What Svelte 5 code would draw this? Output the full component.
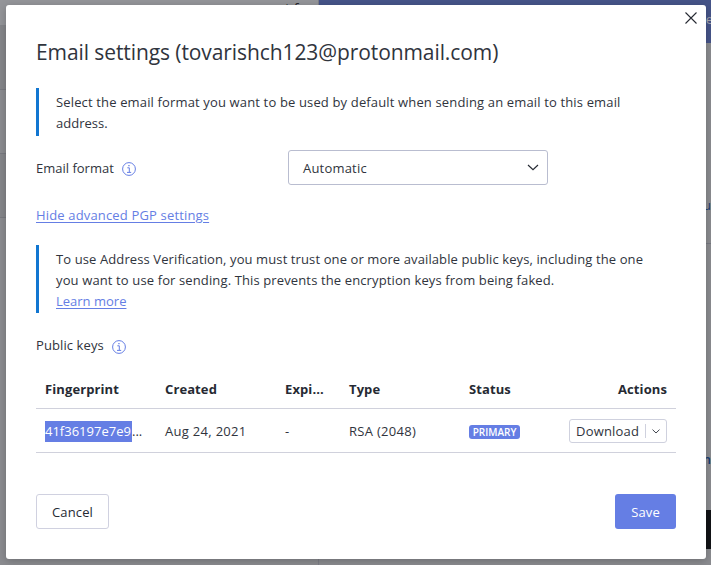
<script>
  const columns = ['Fingerprint', 'Created', 'Expires', 'Type', 'Status', 'Actions'];
  const keys = [
    { fingerprint: '41f36197e7e9', created: 'Aug 24, 2021', expires: '-', type: 'RSA (2048)', status: 'PRIMARY' }
  ];
</script>

{#snippet info()}
  <svg class="info" width="14" height="14" viewBox="0 0 14 14" fill="none" stroke="#657ee4">
    <circle cx="7" cy="7" r="6.4" />
    <path d="M5.3 5.8h2v4.4M5 10.4h4.2" />
    <path d="M6.3 3.6h1.3" stroke-width="1.3" />
  </svg>
{/snippet}

<div class="screen">
  <div class="backdrop" aria-hidden="true">
    <div class="side">
      <div class="side-top"></div>
      <div class="side-item"></div>
      <div class="side-rest"></div>
      <span class="peek-text">t f</span>
    </div>
    <div class="main">
      <div class="banner"><span>re</span></div>
      <div class="panel">
        <span class="u">u</span>
        <div class="rule"></div>
        <span class="n">n</span>
        <div class="dark"></div>
      </div>
    </div>
  </div>

  <div class="modal" role="dialog" aria-label="Email settings">
    <button class="close" aria-label="Close">
      <svg width="12" height="12" viewBox="0 0 12 12" stroke="#262a33" stroke-width="1.1"><path d="M.5.5l11 11M11.5.5l-11 11" /></svg>
    </button>
    <h1>Email settings (tovarishch123@protonmail.com)</h1>

    <div class="note first">
      <p class="l1">Select the email format you want to be used by default when sending an email to this email</p>
      <p>address.</p>
    </div>

    <div class="field">
      <div class="label"><span>Email format</span>{@render info()}</div>
      <div class="select">
        <span class="value">Automatic</span>
        <svg width="12" height="7" viewBox="0 0 12 7" fill="none" stroke="#262a33" stroke-width="1.2"><path d="M1 1l5 4.6L11 1" /></svg>
      </div>
    </div>

    <div class="toggle"><a href="#pgp">Hide advanced PGP settings</a></div>

    <div class="note second">
      <p class="l2">To use Address Verification, you must trust one or more available public keys, including the one</p>
      <p class="l3">you want to use for sending. This prevents the encryption keys from being faked.</p>
      <p><a href="#learn">Learn more</a></p>
    </div>

    <div class="keys-label"><span>Public keys</span>{@render info()}</div>

    <div class="table">
      <div class="row head">
        {#each columns as column}
          <div class="cell">{column === 'Expires' ? 'Expi...' : column}</div>
        {/each}
      </div>
      {#each keys as key}
        <div class="row data">
          <div class="cell"><span class="selected">{key.fingerprint}</span><span>...</span></div>
          <div class="cell"><span class="date">{key.created}</span></div>
          <div class="cell">{key.expires}</div>
          <div class="cell"><span class="type">{key.type}</span></div>
          <div class="cell"><span class="badge">{key.status}</span></div>
          <div class="cell">
            <div class="split">
              <span class="download">Download</span>
              <i></i>
              <svg width="8" height="5" viewBox="0 0 8 5" fill="none" stroke="#42464f"><path d="M.5.6L4 4 7.5.6" /></svg>
            </div>
          </div>
        </div>
      {/each}
    </div>

    <div class="footer">
      <button class="cancel">Cancel</button>
      <button class="save">Save</button>
    </div>
  </div>
</div>

<style>
  .screen {
    position: relative;
    width: 711px;
    height: 565px;
    overflow: hidden;
    font: 13px/21px "Open Sans", "Noto Sans", sans-serif;
    color: #30343d;
  }
  * { box-sizing: border-box; }
  .backdrop { display: flex; height: 565px; background: #8b8c90; }
  .side { position: relative; width: 319px; border-right: 1px solid #7d7e87; }
  .side-top { height: 26px; background: #949599; border-bottom: 1px solid #84858a; }
  .side-item { height: 64px; background: #85868a; border-bottom: 1px solid #797a80; }
  .side-item + .side-rest { height: 475px; }
  .side-rest { background: linear-gradient(#8b8c90 63px, #797a80 63px, #797a80 64px, #85868a 64px, #85868a 127px, #797a80 127px, #797a80 128px, #8b8c90 128px); }
  .peek-text { position: absolute; left: 285px; top: -1px; font-size: 14px; line-height: 20px; color: #24262b; }
  .main { flex: 1; display: flex; flex-direction: column; }
  .banner { height: 43px; background: #465489; text-align: right; padding-top: 9px; color: #a6a8af; }
  .banner span { margin-right: -2px; }
  .panel { flex: 1; background: #8b8c90; display: flex; flex-direction: column; align-items: flex-end; }
  .u { height: 200px; padding-top: 152px; color: #213c70; }
  .rule { width: 100%; height: 1px; background: #777982; }
  .n { height: 266px; padding-top: 205px; font-weight: 600; color: #173c70; }
  .dark { width: 100%; height: 39px; background: #121316; }

  .modal {
    position: absolute;
    left: 6px;
    top: 5px;
    width: 700px;
    height: 554px;
    padding: 0 30px;
    background: #fff;
    border-radius: 3px;
    box-shadow: 0 2px 8px rgba(0, 0, 0, 0.22);
  }
  .close { position: absolute; right: 9px; top: 7px; width: 12px; height: 12px; padding: 0; border: 0; background: none; display: flex; }
  h1 { margin: 0; padding-top: 32px; font-size: 21px; line-height: 30px; font-weight: 400; letter-spacing: -0.09px; white-space: nowrap; height: 83px; }
  p { margin: 0; white-space: nowrap; height: 21px; }
  .l1 { letter-spacing: 0.147px; }
  .l2 { letter-spacing: 0.107px; }
  .l3 { letter-spacing: 0.125px; }
  .note { border-left: 3px solid #1176d1; padding-left: 17px; }
  .first { height: 48px; padding-top: 4px; }
  .second { height: 68px; padding-top: 4px; }
  .field { display: flex; height: 35px; margin-top: 14px; }
  .label { width: 252px; display: flex; padding-top: 8px; }
  .info { margin: 4px 0 0 8px; flex: none; }
  .select { width: 260px; height: 35px; border: 1px solid #b9bdd0; border-radius: 3px; display: flex; align-items: center; justify-content: space-between; padding: 0 8px 0 14px; }
  .value { letter-spacing: 0.2px; padding-top: 2px; }
  .toggle { height: 60px; padding-top: 20px; letter-spacing: 0.16px; }
  a { color: #657ee4; text-decoration: underline; text-underline-offset: 2px; }
  .keys-label { display: flex; height: 56px; padding-top: 22px; letter-spacing: 0.1px; }
  .keys-label .info { margin-top: 5px; }
  .row { display: grid; grid-template-columns: 120px 120px 64px 120px 100px 116px; height: 44px; border-bottom: 1px solid #d0d1dc; align-items: center; }
  .head { height: 40px; font-weight: 700; padding-top: 2px; color: #262a33; letter-spacing: 0.1px; }
  .data { padding-top: 1px; }
  .cell { padding-left: 9px; display: flex; white-space: nowrap; }
  .cell:last-child { justify-content: flex-end; padding: 0 9px 0 0; }
  .date { letter-spacing: 0.3px; }
  .type { letter-spacing: 0.3px; }
  .selected { background: #657ee4; color: #fff; width: 87px; }
  .badge { height: 14px; width: 51px; border-radius: 3px; background: #657ee4; color: #fff; font-size: 10px; line-height: 14px; font-weight: 600; text-align: center; margin-top: 1px; }
  .split { width: 98px; height: 24px; border: 1px solid #cfd1de; border-radius: 3px; display: flex; align-items: center; padding-left: 6px; }
  .download { width: 69px; letter-spacing: 0.2px; }
  .split i { width: 1px; height: 14px; background: #cfd1de; margin-right: 6px; }
  .footer { display: flex; justify-content: space-between; padding-top: 41px; }
  .footer button { height: 35px; border-radius: 3px; font: inherit; letter-spacing: 0.15px; padding: 2px 0 0; }
  .cancel { width: 73px; border: 1px solid #d0d1e0; background: #fff; color: #262a33; }
  .save { width: 61px; border: 0; background: #657ee4; color: #fff; }
</style>
